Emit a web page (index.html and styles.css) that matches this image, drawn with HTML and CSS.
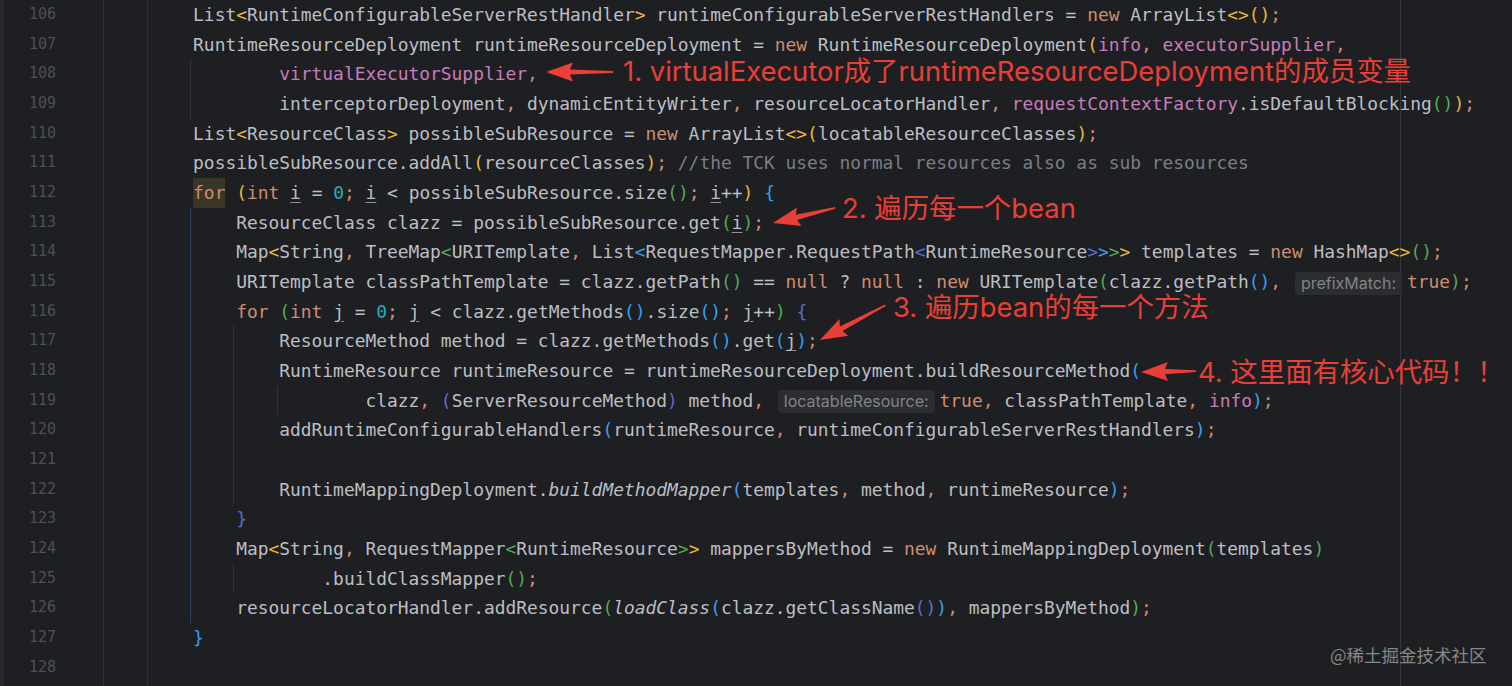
FILE: index.html
```html
<!DOCTYPE html>
<html lang="zh-CN">
<head>
  <meta charset="UTF-8" />
  <meta name="viewport" content="width=device-width, initial-scale=1.0"/>
  <title>RuntimeResourceDeployment</title>
  <link rel="stylesheet" href="styles.css">
</head>
<body>
  <div class="editor">
    <div class="gutter">
      <div class="num">106</div>
      <div class="num">107</div>
      <div class="num">108</div>
      <div class="num">109</div>
      <div class="num">110</div>
      <div class="num">111</div>
      <div class="num">112</div>
      <div class="num">113</div>
      <div class="num">114</div>
      <div class="num">115</div>
      <div class="num">116</div>
      <div class="num">117</div>
      <div class="num">118</div>
      <div class="num">119</div>
      <div class="num">120</div>
      <div class="num">121</div>
      <div class="num">122</div>
      <div class="num">123</div>
      <div class="num">124</div>
      <div class="num">125</div>
      <div class="num">126</div>
      <div class="num">127</div>
      <div class="num">128</div>
    </div>
    <div class="fold"></div>

    <div class="code">
<div class="line">    List<span class="b1">&lt;</span>RuntimeConfigurableServerRestHandler<span class="b1">&gt;</span> runtimeConfigurableServerRestHandlers = <span class="k">new</span> ArrayList<span class="b1">&lt;&gt;()</span><span class="k">;</span></div>
<div class="line">    RuntimeResourceDeployment runtimeResourceDeployment = <span class="k">new</span> RuntimeResourceDeployment<span class="b1">(</span><span class="f">info</span><span class="k">,</span> <span class="f">executorSupplier</span><span class="k">,</span></div>
<div class="line ga">            <span class="f">virtualExecutorSupplier</span><span class="k">,</span></div>
<div class="line ga">            interceptorDeployment<span class="k">,</span> dynamicEntityWriter<span class="k">,</span> resourceLocatorHandler<span class="k">,</span> <span class="f">requestContextFactory</span>.isDefaultBlocking<span class="b2">()</span><span class="b1">)</span><span class="k">;</span></div>
<div class="line">    List<span class="b1">&lt;</span>ResourceClass<span class="b1">&gt;</span> possibleSubResource = <span class="k">new</span> ArrayList<span class="b1">&lt;&gt;(</span>locatableResourceClasses<span class="b1">)</span><span class="k">;</span></div>
<div class="line">    possibleSubResource.addAll<span class="b1">(</span>resourceClasses<span class="b1">)</span><span class="k">;</span> <span class="c">//the TCK uses normal resources also as sub resources</span></div>
<div class="line">    <span class="k hl">for</span> <span class="b1">(</span><span class="k">int</span> <span class="u">i</span> = <span class="n">0</span><span class="k">;</span> <span class="u">i</span> &lt; possibleSubResource.size<span class="b2">()</span><span class="k">;</span> <span class="u">i</span>++<span class="b1">)</span> <span class="b3">{</span></div>
<div class="line gb">        ResourceClass clazz = possibleSubResource.get<span class="b2">(</span><span class="u">i</span><span class="b2">)</span><span class="k">;</span></div>
<div class="line gb">        Map<span class="b1">&lt;</span>String<span class="k">,</span> TreeMap<span class="b2">&lt;</span>URITemplate<span class="k">,</span> List<span class="b3">&lt;</span>RequestMapper.RequestPath<span class="b4">&lt;</span>RuntimeResource<span class="b4">&gt;</span><span class="b3">&gt;</span><span class="b2">&gt;</span><span class="b1">&gt;</span> templates = <span class="k">new</span> HashMap<span class="b1">&lt;&gt;</span><span class="b2">()</span><span class="k">;</span></div>
<div class="line gb">        URITemplate classPathTemplate = clazz.getPath<span class="b2">()</span> == <span class="k">null</span> ? <span class="k">null</span> : <span class="k">new</span> URITemplate<span class="b2">(</span>clazz.getPath<span class="b3">()</span><span class="k">,</span> <span class="hint">prefixMatch:</span><span class="k">true</span><span class="b2">)</span><span class="k">;</span></div>
<div class="line gb">        <span class="k">for</span> <span class="b2">(</span><span class="k">int</span> <span class="u">j</span> = <span class="n">0</span><span class="k">;</span> <span class="u">j</span> &lt; clazz.getMethods<span class="b3">()</span>.size<span class="b3">()</span><span class="k">;</span> <span class="u">j</span>++<span class="b2">)</span> <span class="b4">{</span></div>
<div class="line gbc">            ResourceMethod method = clazz.getMethods<span class="b3">()</span>.get<span class="b3">(</span><span class="u">j</span><span class="b3">)</span><span class="k">;</span></div>
<div class="line gbc">            RuntimeResource runtimeResource = runtimeResourceDeployment.buildResourceMethod<span class="b3">(</span></div>
<div class="line gbcd">                    clazz<span class="k">,</span> <span class="b4">(</span>ServerResourceMethod<span class="b4">)</span> method<span class="k">,</span> <span class="hint">locatableResource:</span><span class="k">true</span><span class="k">,</span> classPathTemplate<span class="k">,</span> <span class="f">info</span><span class="b3">)</span><span class="k">;</span></div>
<div class="line gbc">            addRuntimeConfigurableHandlers<span class="b3">(</span>runtimeResource<span class="k">,</span> runtimeConfigurableServerRestHandlers<span class="b3">)</span><span class="k">;</span></div>
<div class="line gbc"></div>
<div class="line gbc">            RuntimeMappingDeployment.<span class="it">buildMethodMapper</span><span class="b3">(</span>templates<span class="k">,</span> method<span class="k">,</span> runtimeResource<span class="b3">)</span><span class="k">;</span></div>
<div class="line gb">        <span class="b4">}</span></div>
<div class="line gb">        Map<span class="b1">&lt;</span>String<span class="k">,</span> RequestMapper<span class="b2">&lt;</span>RuntimeResource<span class="b2">&gt;</span><span class="b1">&gt;</span> mappersByMethod = <span class="k">new</span> RuntimeMappingDeployment<span class="b2">(</span>templates<span class="b2">)</span></div>
<div class="line gbc">                .buildClassMapper<span class="b2">()</span><span class="k">;</span></div>
<div class="line gb">        resourceLocatorHandler.addResource<span class="b2">(</span><span class="it">loadClass</span><span class="b3">(</span>clazz.getClassName<span class="b4">()</span><span class="b3">)</span><span class="k">,</span> mappersByMethod<span class="b2">)</span><span class="k">;</span></div>
<div class="line">    <span class="b3">}</span></div>
<div class="line"></div>
    </div>

    <!-- annotations drawn on top of the screenshot -->
    <svg class="arrows" width="1512" height="686" viewBox="0 0 1512 686">
      <polygon transform="translate(546 72)" points="0,0 27,-9.5 24,-2.6 67,-0.9 67,0.9 24,2.6 27,9.5" />
      <polygon transform="translate(773 223) rotate(-13.6)" points="0,0 27,-9.5 24,-2.6 64,-0.9 64,0.9 24,2.6 27,9.5" />
      <polygon transform="translate(820 340) rotate(-28)" points="0,0 27,-9.5 24,-2.6 74,-0.9 74,0.9 24,2.6 27,9.5" />
      <polygon transform="translate(1141 372) rotate(-1)" points="0,0 27,-9.5 24,-2.6 55,-0.9 55,0.9 24,2.6 27,9.5" />
    </svg>
    <div class="note n1">1. virtualExecutor成了runtimeResourceDeployment的成员变量</div>
    <div class="note n2">2. 遍历每一个bean</div>
    <div class="note n3">3. 遍历bean的每一个方法</div>
    <div class="note n4">4. 这里面有核心代码！！</div>
    <div class="mark">@稀土掘金技术社区</div>
  </div>
</body>
</html>
```

FILE: styles.css
```css
body {
  margin: 0;
  background: #1e1f22;
  overflow: hidden;
}

.editor {
  position: relative;
  display: flex;
  height: 686px;
  font-family: 'DejaVu Sans Mono', 'Liberation Mono', monospace;
}

/* line numbers */
.gutter {
  box-sizing: border-box;
  width: 104px;
  padding-right: 47px;
  border-left: 4px solid #27292d;
  border-right: 1px solid #2c2e32;
}

.num {
  height: 29.68px;
  line-height: 29.68px;
  text-align: right;
  font-size: 15px;
  color: #4b5059;
}

.fold {
  box-sizing: border-box;
  width: 44px;
  border-right: 1px solid #2c2e32;
}

/* code area, right margin at x=1400 */
.code {
  flex: 1;
  background: linear-gradient(to right, transparent 1252px, #34363b 1252px, #34363b 1253px, transparent 1253px);
}

.line {
  height: 29.68px;
  line-height: 29.68px;
  padding-left: 2px;
  white-space: pre;
  font-size: 17.9px;
  color: #bcbec4;
}

/* indent guides */
.ga {
  background: linear-gradient(to right, transparent 42px, #323438 42px, #323438 43px, transparent 43px);
}

.gb {
  background: linear-gradient(to right, transparent 42px, #2f4158 42px, #2f4158 43px, transparent 43px);
}

.gbc {
  background:
    linear-gradient(to right, transparent 42px, #2f4158 42px, #2f4158 43px, transparent 43px),
    linear-gradient(to right, transparent 85px, #323438 85px, #323438 86px, transparent 86px);
}

.gbcd {
  background:
    linear-gradient(to right, transparent 42px, #2f4158 42px, #2f4158 43px, transparent 43px),
    linear-gradient(to right, transparent 85px, #323438 85px, #323438 86px, transparent 86px),
    linear-gradient(to right, transparent 129px, #323438 129px, #323438 130px, transparent 130px);
}

/* syntax */
.k { color: #cf8e6d; }
.n { color: #2aacb8; }
.f { color: #c77dbb; }
.c { color: #7a7e85; }
.it { font-style: italic; }
.b1 { color: #e8ba36; }
.b2 { color: #54a857; }
.b3 { color: #359ff4; }
.b4 { color: #5c6bd0; }

.u {
  text-decoration: underline;
  text-decoration-color: #8d9097;
  text-underline-offset: 3px;
}

.hl {
  display: inline-block;
  background: #3a3527;
}

.hint {
  display: inline-block;
  margin: 0 5px 0 3px;
  padding: 0 6px;
  border-radius: 4px;
  background: #2b2d30;
  color: #80848b;
  font-family: 'Inter', sans-serif;
  font-size: 16px;
  line-height: 23px;
  vertical-align: middle;
}

/* red notes */
.arrows {
  position: absolute;
  top: 0;
  left: 0;
  fill: #ea3f36;
}

.note {
  position: absolute;
  color: #ea3f36;
  font-family: 'Inter', 'Noto Sans CJK SC', sans-serif;
  font-size: 27.4px;
  line-height: 30px;
  white-space: nowrap;
}

.n1 { left: 623px; top: 56px; }
.n2 { left: 842px; top: 193px; }
.n3 { left: 893px; top: 292px; }
.n4 { left: 1198px; top: 357px; }

.mark {
  position: absolute;
  left: 1330px;
  top: 642px;
  font-family: 'Noto Sans CJK SC', sans-serif;
  font-size: 17.5px;
  color: #85878b;
}
```
